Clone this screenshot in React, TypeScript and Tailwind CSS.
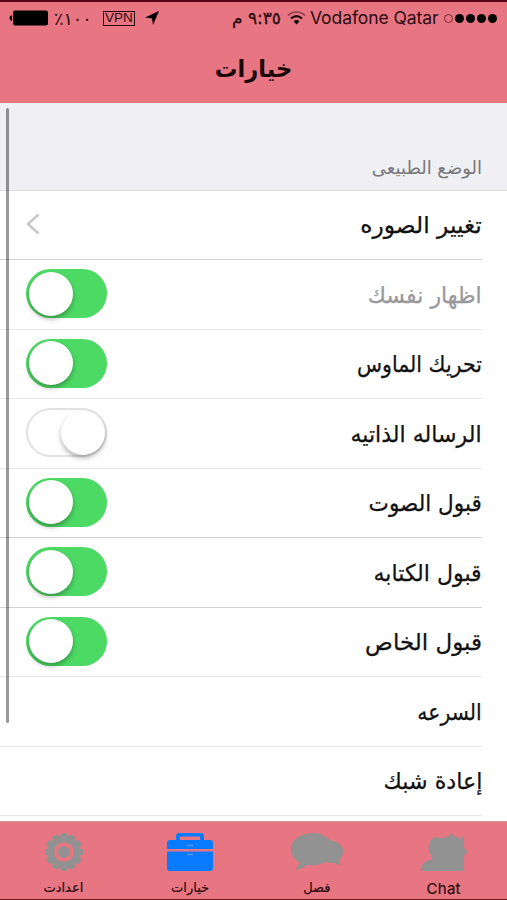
import clsx from "clsx";

type Option = {
  label: string;
  kind?: "link" | "switch";
  on?: boolean;
  muted?: boolean;
  line: string;
  stretch: string;
};

const options: Option[] = [
  { label: "تغيير الصوره", kind: "link", line: "bg-[#d2d2d4]", stretch: "scale-x-[1.015]" },
  { label: "اظهار نفسك", kind: "switch", on: true, muted: true, line: "bg-[#e8e8ea]", stretch: "scale-x-[0.96]" },
  { label: "تحريك الماوس", kind: "switch", on: true, line: "bg-[#e8e8ea]", stretch: "scale-x-[0.893]" },
  { label: "الرساله الذاتيه", kind: "switch", on: false, line: "bg-[#e8e8ea]", stretch: "scale-x-[0.96]" },
  { label: "قبول الصوت", kind: "switch", on: true, line: "bg-[#d2d2d4]", stretch: "scale-x-[0.937]" },
  { label: "قبول الكتابه", kind: "switch", on: true, line: "bg-[#d2d2d4]", stretch: "scale-x-[0.96]" },
  { label: "قبول الخاص", kind: "switch", on: true, line: "bg-[#e8e8ea]", stretch: "scale-x-100" },
  { label: "السرعه", line: "bg-[#e8e8ea]", stretch: "scale-x-[0.885]" },
  { label: "إعادة شبك", line: "bg-[#e8e8ea]", stretch: "scale-x-[0.965]" },
];

const Switch = ({ on }: { on?: boolean }) => (
  <div
    className={clsx(
      "flex h-[49px] w-[81px] items-center rounded-full",
      on ? "justify-end bg-[#4cd964] px-[3px]" : "justify-start border-2 border-[#e2e2e3] bg-white"
    )}
  >
    <div className="size-[44px] rounded-full bg-white shadow-[0_3px_5px_rgba(0,0,0,0.3)]" />
  </div>
);

const Chevron = () => (
  <svg className="h-[22px] w-[14px]" fill="none" viewBox="0 0 14 22">
    <path d="M12.500 1.500 2 11l10.500 9.500" stroke="#c7c7cc" strokeWidth="2.600" />
  </svg>
);

const OptionRow = ({ option }: { option: Option }) => (
  <div className="relative flex h-[69.5px] shrink-0 items-center justify-between pr-[25px] pb-[2px] pl-[26px]">
    <span
      className={clsx(
        "mt-[3px] origin-right whitespace-nowrap text-[23px] leading-none [-webkit-text-stroke:0.25px]",
        option.stretch,
        option.muted ? "text-[#98989a]" : "text-[#111]"
      )}
    >
      {option.label}
    </span>
    {option.kind === "link" && <Chevron />}
    {option.kind === "switch" && <Switch on={option.on} />}
    <div className={clsx("absolute right-[25px] bottom-0 left-0 h-px", option.line)} />
  </div>
);

const StatusBar = () => (
  <div
    className="flex h-[34px] items-center border-[#520814] border-t-2 pr-[10px] pl-[9px] text-[#2b0b10]"
    dir="ltr"
  >
    <svg className="h-[16px] w-[39px]" viewBox="0 0 39 16">
      <path d="M3 5v6C1.500 10.500.500 9.500.500 8S1.500 5.500 3 5Z" fill="#000" />
      <rect fill="#000" height="15" rx="2" width="35" x="4" y=".5" />
    </svg>
    <span className="mt-[2px] ml-[6px] w-[37px] whitespace-nowrap text-[17.5px]">٪١٠٠</span>
    <span className="ml-[12px] flex h-[15px] w-[32px] items-center justify-center border border-[#2b0b10] font-['Liberation_Sans'] text-[13.5px] leading-none">
      VPN
    </span>
    <svg className="ml-[10px] h-[14px] w-[14px]" viewBox="0 0 14 14">
      <path d="M14 0 8 14 7 7.500 0 6.500Z" fill="#000" />
    </svg>
    <span className="mt-[2px] ml-[72px] w-[50px] whitespace-nowrap text-[17px] [-webkit-text-stroke:0.3px]" dir="rtl">
      ٩:٣٥ م
    </span>
    <svg className="ml-[6px] h-[14px] w-[19px]" fill="none" viewBox="0 0 19 14">
      <path d="M1 4.500C6-.2 13-.2 18 4.500" stroke="#8a3c48" strokeWidth="1.700" />
      <path d="M4 7.500c3.500-3 7.500-3 11 0" stroke="#1d0508" strokeWidth="2.200" />
      <path d="m6.500 10.200 3 3.300 3-3.300c-2-1.600-4-1.600-6 0Z" fill="#000" />
    </svg>
    <span className="mt-px ml-[4px] w-[129px] whitespace-nowrap font-['Inter'] text-[17.5px] tracking-[-0.08px]">
      Vodafone Qatar
    </span>
    <div className="ml-auto flex gap-[2px]">
      <i className="size-[9px] rounded-full border border-[#7d2935]" />
      <i className="size-[9px] rounded-full bg-black" />
      <i className="size-[9px] rounded-full bg-black" />
      <i className="size-[9px] rounded-full bg-black" />
      <i className="size-[9px] rounded-full bg-black" />
    </div>
  </div>
);

const teeth = Array.from({ length: 12 }, (_, i) => i * 30);

const GearIcon = () => (
  <svg className="ml-px h-[42px] w-[42px]" fill="#929292" viewBox="0 0 42 42">
    {teeth.map((angle) => (
      <path d="m16.500 8 1.700-6h5.600l1.700 6Z" key={angle} transform={`rotate(${angle} 21 21)`} />
    ))}
    <circle cx="21" cy="21" fill="none" r="13" stroke="#929292" strokeWidth="6.500" />
    <circle cx="21" cy="21" r="6" />
  </svg>
);

const CaseIcon = () => (
  <svg className="h-[40px] w-[48px]" fill="#087bff" viewBox="0 0 48 40">
    <path d="M10 8V4q0-3 3-3h22q3 0 3 3v4h6q3 0 3 3v6H1v-6q0-3 3-3Zm4 0h20V4.500H14Z" />
    <path d="M1 19.500h46V36q0 3-3 3H4q-3 0-3-3Z" />
    <path d="M21 13.500h6M21 22.500h6" stroke="#5793e8" strokeWidth="1.500" />
  </svg>
);

const BubblesIcon = () => (
  <svg className="h-[40px] w-[54px]" fill="#929292" viewBox="0 0 54 40">
    <path d="M24 1C10 1 1 8 1 17c0 6 3 10 8 13 0 4-2 6-4 8 5-.5 9-2.500 12-5 6 1 13 0 19-3 4 1 7 1 9 1 2 1.500 4 2 6 2-2-2-2-3-2-5 7-6 5-16-5-19-4-1-4-1.500-9-4C32 2 29 1 24 1Z" />
  </svg>
);

const PeopleIcon = () => (
  <svg className="h-[40px] w-[48px]" fill="#929292" viewBox="0 0 48 40">
    <path d="M11 8c2-3 6-3.500 10-2h4l2-2 1.500.5L31 1l3 3.500h4V7l6-3v12l4 4-4 3.500V39H1c0-6 2-9 9-11 3-1 3-3 0-6-2-4-2-10 1-14Z" />
  </svg>
);

const tabs = [
  { label: "Chat", icon: <PeopleIcon />, font: "font-['Inter'] text-[15px] tracking-[0.3px] pt-px" },
  { label: "فصل", icon: <BubblesIcon />, font: "text-[13px]" },
  { label: "خيارات", icon: <CaseIcon />, font: "text-[13px]" },
  { label: "اعدادت", icon: <GearIcon />, font: "text-[13px]" },
];

export default function App() {
  return (
    <div
      className="flex h-[900px] w-[507px] flex-col overflow-hidden bg-white font-['DejaVu_Sans',sans-serif]"
      dir="rtl"
    >
      <header className="h-[103px] shrink-0 bg-[#e87682]">
        <StatusBar />
        <h1 className="mt-[19px] scale-x-[0.94] text-center font-bold text-[24px] text-[#190508] leading-[32px]">
          خيارات
        </h1>
      </header>

      <main className="relative flex-1 overflow-hidden">
        <div className="flex h-[87.5px] items-end border-[#dddde1] border-b bg-[#efeff4] pr-[25px] pb-[12px]">
          <h2 className="whitespace-nowrap text-[#77777b] text-[18px] leading-[20px]">الوضع الطبيعى</h2>
        </div>
        {options.map((option) => (
          <OptionRow key={option.label} option={option} />
        ))}
        <div className="absolute top-[5px] left-[6px] h-[615px] w-[3px] rounded-full bg-black/40" />
      </main>

      <footer className="grid h-[79px] shrink-0 grid-cols-4 border-[#d8939b] border-t border-b border-b-[#6d1823] bg-[#e87682]">
        {tabs.map((tab) => (
          <div className="flex flex-col items-center pt-[9px]" key={tab.label}>
            <div className="flex h-[42px] items-center">{tab.icon}</div>
            <span className={clsx("mt-[5px] text-[#2b0b10] leading-[20px] [-webkit-text-stroke:0.2px]", tab.font)}>
              {tab.label}
            </span>
          </div>
        ))}
      </footer>
    </div>
  );
}
